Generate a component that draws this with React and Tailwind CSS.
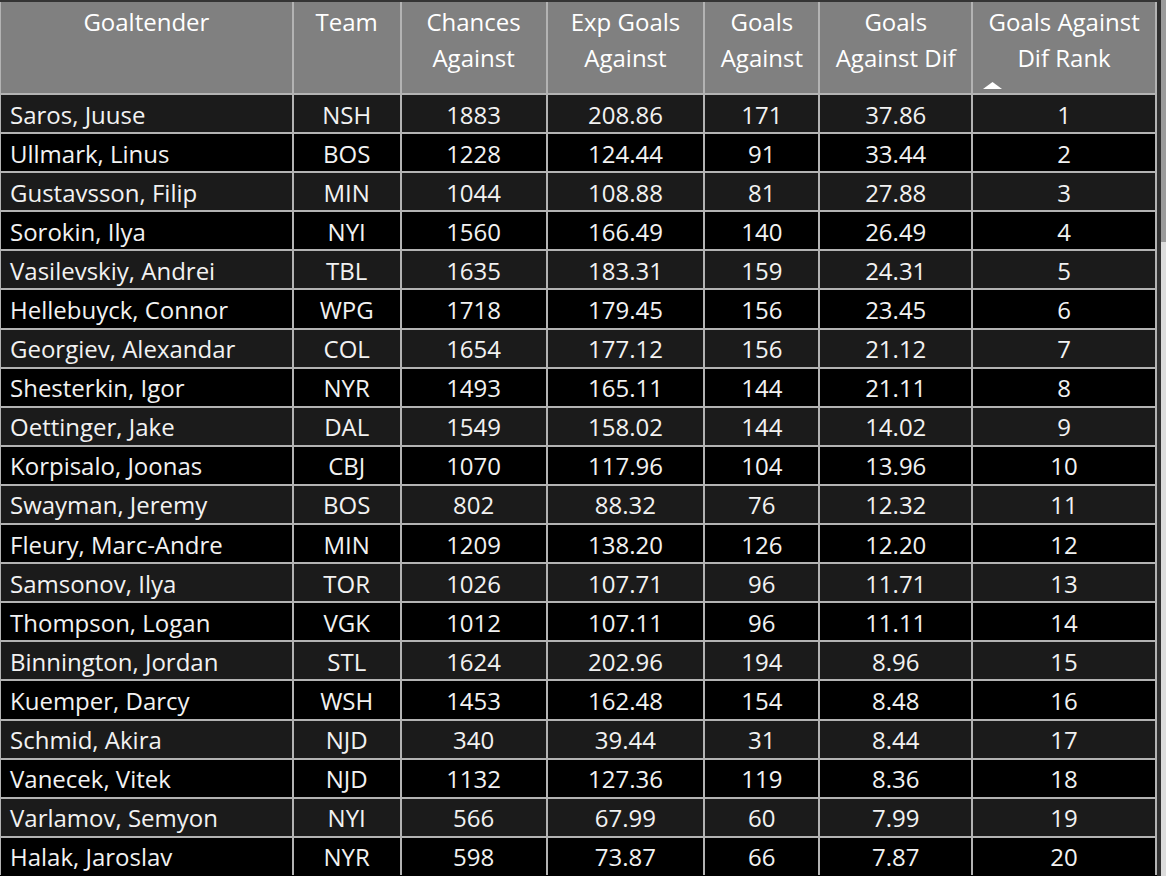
const cols = [
  { key: 'name', w: 'w-[291px]', head: ['Goaltender'] },
  { key: 'team', w: 'w-[108px]', head: ['Team'] },
  { key: 'ca', w: 'w-[146px]', head: ['Chances', 'Against'] },
  { key: 'xga', w: 'w-[158px]', head: ['Exp Goals', 'Against'] },
  { key: 'ga', w: 'w-[115px]', head: ['Goals', 'Against'] },
  { key: 'dif', w: 'w-[153px]', head: ['Goals', 'Against Dif'] },
  { key: 'rank', w: 'w-[186px]', head: ['Goals Against', 'Dif Rank'] },
]

const rows = [
  ['Saros, Juuse', 'NSH', '1883', '208.86', '171', '37.86'],
  ['Ullmark, Linus', 'BOS', '1228', '124.44', '91', '33.44'],
  ['Gustavsson, Filip', 'MIN', '1044', '108.88', '81', '27.88'],
  ['Sorokin, Ilya', 'NYI', '1560', '166.49', '140', '26.49'],
  ['Vasilevskiy, Andrei', 'TBL', '1635', '183.31', '159', '24.31'],
  ['Hellebuyck, Connor', 'WPG', '1718', '179.45', '156', '23.45'],
  ['Georgiev, Alexandar', 'COL', '1654', '177.12', '156', '21.12'],
  ['Shesterkin, Igor', 'NYR', '1493', '165.11', '144', '21.11'],
  ['Oettinger, Jake', 'DAL', '1549', '158.02', '144', '14.02'],
  ['Korpisalo, Joonas', 'CBJ', '1070', '117.96', '104', '13.96'],
  ['Swayman, Jeremy', 'BOS', '802', '88.32', '76', '12.32'],
  ['Fleury, Marc-Andre', 'MIN', '1209', '138.20', '126', '12.20'],
  ['Samsonov, Ilya', 'TOR', '1026', '107.71', '96', '11.71'],
  ['Thompson, Logan', 'VGK', '1012', '107.11', '96', '11.11'],
  ['Binnington, Jordan', 'STL', '1624', '202.96', '194', '8.96'],
  ['Kuemper, Darcy', 'WSH', '1453', '162.48', '154', '8.48'],
  ['Schmid, Akira', 'NJD', '340', '39.44', '31', '8.44'],
  ['Vanecek, Vitek', 'NJD', '1132', '127.36', '119', '8.36'],
  ['Varlamov, Semyon', 'NYI', '566', '67.99', '60', '7.99'],
  ['Halak, Jaroslav', 'NYR', '598', '73.87', '66', '7.87'],
]

export default function App() {
  return (
    <div className="w-[1166px] h-[876px] overflow-hidden bg-black flex text-white text-[24px] font-['Open_Sans','Noto_Sans',sans-serif]">
      <div className="w-[1157px] flex flex-col">
        <div className="h-[2px] bg-[#343434]" />
        {/* header */}
        <div className="flex h-[91px] bg-[#808080] border-l border-[#b3b3b3]">
          {cols.map((c, i) => (
            <div
              key={c.key}
              className={`${c.w} relative pt-[2px] text-center leading-[36px] ${i > 0 ? 'border-l-2 border-[#b3b3b3]' : ''} ${i === cols.length - 1 ? 'border-r-2 border-[#b3b3b3]' : ''}`}
            >
              {c.head.map(h => <div key={h}>{h}</div>)}
              {c.key === 'rank' && (
                <svg className="absolute left-[10px] top-[80px]" width="19" height="7" viewBox="0 0 19 7">
                  <polygon points="9.5,0 19,7 0,7" fill="#ffffff" />
                </svg>
              )}
            </div>
          ))}
        </div>

        {/* body */}
        {rows.map((r, ri) => (
          <div
            key={r[0]}
            className={`flex h-[39.1px] shrink-0 border-t-2 border-l border-[#b3b3b3] ${ri % 2 === 0 ? 'bg-[#1b1b1b]' : 'bg-black'}`}
          >
            {[...r, String(ri + 1)].map((v, i) => (
              <div
                key={i}
                className={`${cols[i].w} flex items-center pt-[2px] ${i === 0 ? 'pl-[9px]' : 'justify-center border-l-2 border-[#b3b3b3]'} ${i === 6 ? 'border-r-2' : ''} text-[#f2f2f2]`}
              >
                {v}
              </div>
            ))}
          </div>
        ))}
      </div>

      {/* scrollbar edge */}
      <div className="w-[4px] bg-[#303030]" />
      <div className="w-[5px] flex flex-col bg-[#dcdcdc]">
        <div className="h-[242px] bg-[#9a9a9a]" />
      </div>
    </div>
  )
}
